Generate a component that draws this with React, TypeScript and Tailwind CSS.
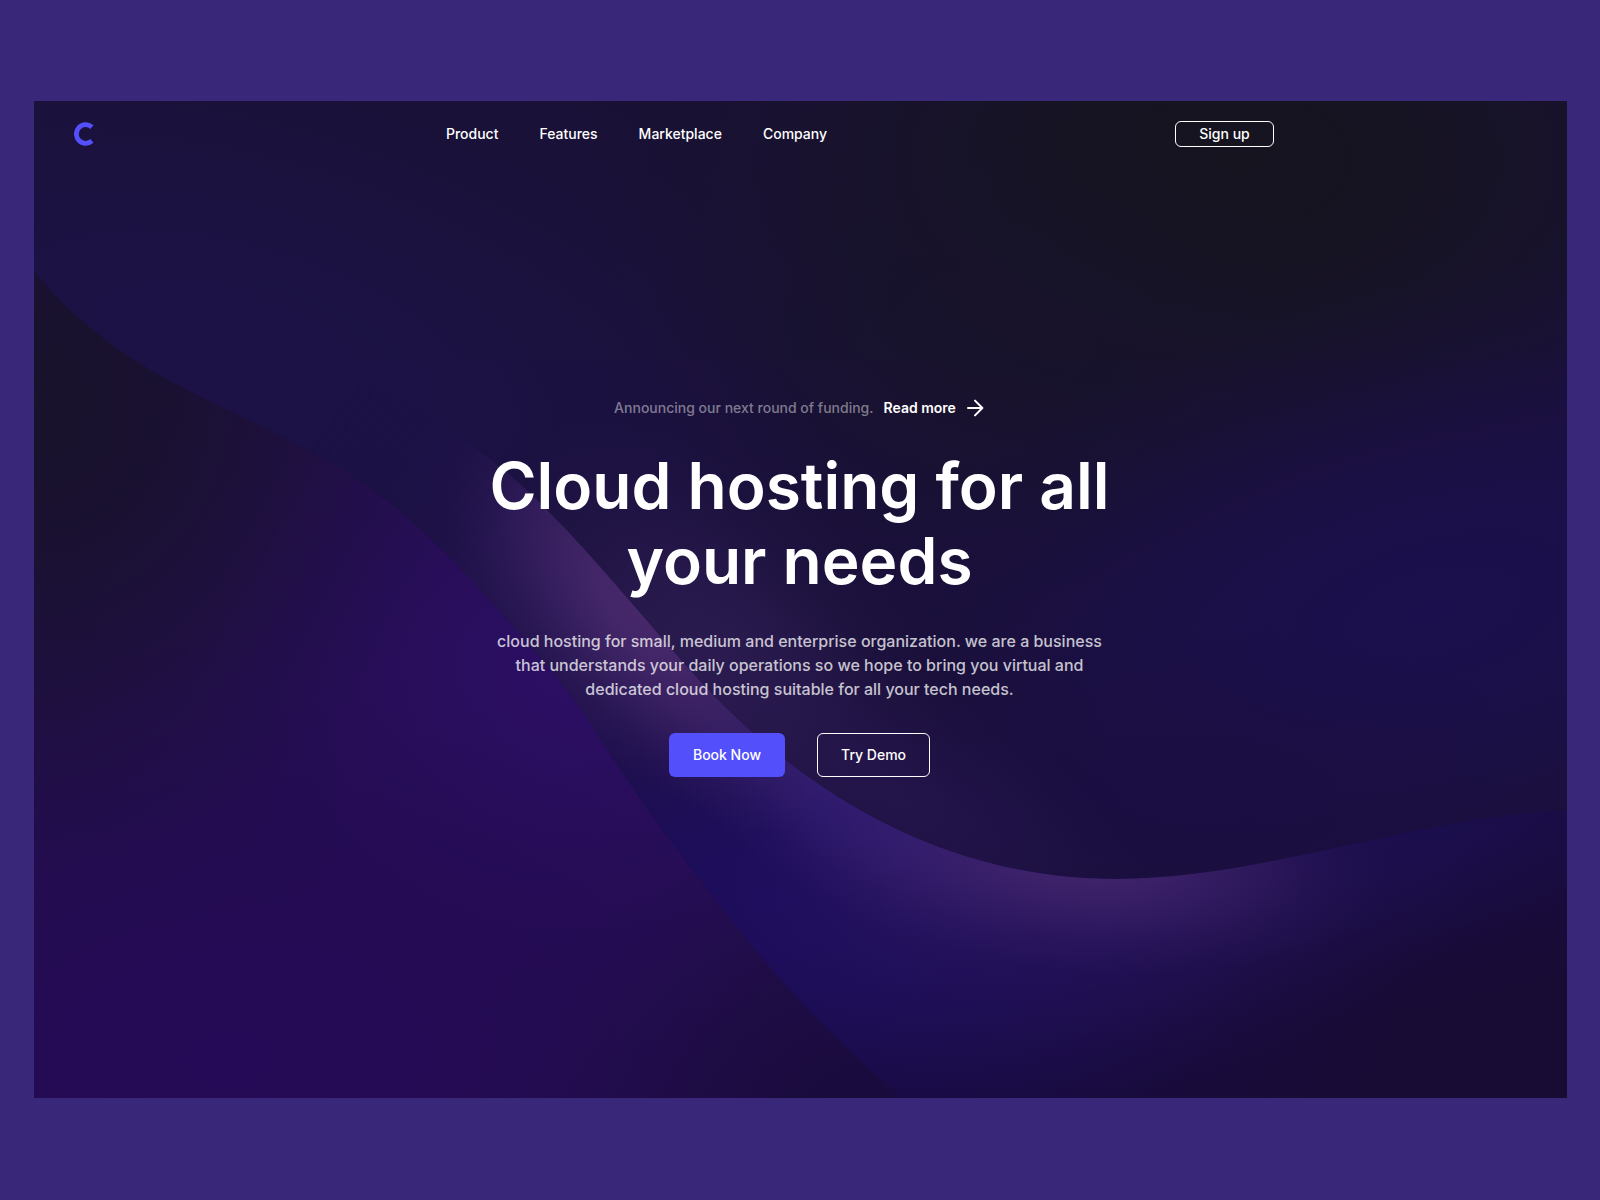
import React from 'react';

interface Glow {
    id: string;
    cx: number;
    cy: number;
    rx: number;
    ry: number;
    color: string;
    opacity?: number;
    rotate?: number;
}

const navLinks = ['Product', 'Features', 'Marketplace', 'Company'];

// Upper sheet, painted over the whole hero
const skyGlows: Glow[] = [
    { id: 'sky-left', cx: 200, cy: 260, rx: 820, ry: 380, color: '#1c1248', opacity: 0.9, rotate: 15 },
    { id: 'sky-dark', cx: 1200, cy: 60, rx: 660, ry: 400, color: '#16141f' },
    { id: 'sky-dark-mid', cx: 960, cy: 240, rx: 360, ry: 260, color: '#17132a', opacity: 0.7 },
    { id: 'sky-right', cx: 1400, cy: 510, rx: 700, ry: 330, color: '#1b0f4e', opacity: 0.95, rotate: -15 },
    { id: 'sky-low', cx: 1150, cy: 700, rx: 420, ry: 180, color: '#1a0d42', opacity: 0.8 },
    { id: 'sky-haze', cx: 680, cy: 560, rx: 290, ry: 180, color: '#2b1b50', rotate: 45 },
    { id: 'sky-haze-low', cx: 870, cy: 700, rx: 280, ry: 120, color: '#26154e', opacity: 0.7, rotate: 30 },
];

// Middle ribbon, with the two bright edges
const ribbonGlows: Glow[] = [
    { id: 'ribbon-left', cx: 300, cy: 300, rx: 520, ry: 300, color: '#1b1148', rotate: 35 },
    { id: 'ribbon-blue', cx: 760, cy: 800, rx: 620, ry: 340, color: '#1b0c5e', rotate: 10 },
    { id: 'ribbon-right', cx: 1380, cy: 720, rx: 440, ry: 190, color: '#1b0e50', opacity: 0.9, rotate: -12 },
    { id: 'ribbon-edge-low-wide', cx: 1000, cy: 780, rx: 440, ry: 220, color: '#28145e', opacity: 0.9 },
    { id: 'ribbon-edge-low', cx: 1040, cy: 750, rx: 310, ry: 120, color: '#42256c', rotate: 6 },
    { id: 'ribbon-edge-mid', cx: 770, cy: 630, rx: 300, ry: 130, color: '#36207a', opacity: 0.9, rotate: 42 },
    { id: 'ribbon-edge-top-wide', cx: 560, cy: 490, rx: 320, ry: 240, color: '#281755', rotate: 50 },
    { id: 'ribbon-edge-top', cx: 615, cy: 510, rx: 270, ry: 130, color: '#48296b', rotate: 50 },
];

// Lower left sheet
const duneGlows: Glow[] = [
    { id: 'dune-bright', cx: 540, cy: 580, rx: 500, ry: 440, color: '#2d0e66', opacity: 0.9 },
    { id: 'dune-bottom', cx: 200, cy: 960, rx: 720, ry: 440, color: '#250a57' },
    { id: 'dune-dark', cx: 0, cy: 300, rx: 440, ry: 460, color: '#18122b' },
    { id: 'dune-shade', cx: 830, cy: 1010, rx: 340, ry: 260, color: '#1a0b3e' },
];

const GlowLayer: React.FC<{ glows: Glow[] }> = ({ glows }) => (
    <>
        {glows.map(({ id, cx, cy, rx, ry, color, opacity = 1, rotate = 0 }) => (
            <g key={id} transform={`rotate(${rotate} ${cx} ${cy})`}>
                <radialGradient id={id}>
                    <stop offset="0" stopColor={color} stopOpacity={opacity} />
                    <stop offset="0.25" stopColor={color} stopOpacity={opacity * 0.84} />
                    <stop offset="0.5" stopColor={color} stopOpacity={opacity * 0.5} />
                    <stop offset="0.75" stopColor={color} stopOpacity={opacity * 0.16} />
                    <stop offset="1" stopColor={color} stopOpacity="0" />
                </radialGradient>
                <ellipse cx={cx} cy={cy} rx={rx} ry={ry} fill={`url(#${id})`} />
            </g>
        ))}
    </>
);

const Backdrop: React.FC = () => (
    <svg
        className="absolute inset-0 w-full h-full"
        viewBox="0 0 1533 997"
        preserveAspectRatio="none"
        aria-hidden="true"
    >
        <defs>
            <clipPath id="ribbon-clip">
                <path d="M0 170 C60 220 110 235 230 250 C330 265 395 312 456 358 C530 415 600 508 665 579 C760 682 900 778 1082 778 C1230 778 1380 715 1533 709 V997 H0 Z" />
            </clipPath>
            <clipPath id="dune-clip">
                <path d="M0 170 C45 225 95 260 165 295 C235 330 240 330 293 360 C370 403 430 470 476 522 C512 565 540 595 563 633 C605 700 640 745 680 797 C745 880 790 930 868 997 H0 Z" />
            </clipPath>
            {/* The ribbon melts into the sky at its left end */}
            <linearGradient id="ribbon-fade" gradientUnits="userSpaceOnUse" x1="290" y1="330" x2="450" y2="450">
                <stop offset="0" stopColor="#fff" stopOpacity="0" />
                <stop offset="1" stopColor="#fff" />
            </linearGradient>
            <mask id="ribbon-mask" maskUnits="userSpaceOnUse" x="0" y="0" width="1533" height="997">
                <rect width="1533" height="997" fill="url(#ribbon-fade)" />
            </mask>
        </defs>

        <rect width="1533" height="997" fill="#1a1038" />
        <rect width="1533" height="260" fill="#1a1535" opacity="0.4" />
        <GlowLayer glows={skyGlows} />

        <g mask="url(#ribbon-mask)">
            <g clipPath="url(#ribbon-clip)">
                <rect width="1533" height="997" fill="#180b34" />
                <GlowLayer glows={ribbonGlows} />
            </g>
        </g>

        <g clipPath="url(#dune-clip)">
            <rect width="1533" height="997" fill="#200e46" />
            <GlowLayer glows={duneGlows} />
        </g>
    </svg>
);

const Logo: React.FC = () => (
    <svg className="w-6 h-6" viewBox="0 0 24 24" fill="none" stroke="#524ffb" strokeWidth="4.8">
        <path d="M17.9 5.1A9.3 9.3 0 1 0 17.9 18.9" />
    </svg>
);

const Header: React.FC = () => (
    <header className="relative max-w-[1280px] px-10 pt-5">
        <div className="flex items-center justify-between">
            <a href="#" aria-label="Home">
                <Logo />
            </a>
            <nav className="flex gap-[41px]">
                {navLinks.map((link) => (
                    <a key={link} href="#" className="text-sm font-medium">
                        {link}
                    </a>
                ))}
            </nav>
            <button className="w-[99px] h-[26px] border border-white rounded-md text-sm leading-5 font-medium">
                Sign up
            </button>
        </div>
    </header>
);

const Hero: React.FC = () => (
    <main className="relative flex flex-col items-center pt-[251px] pr-0.5 text-center">
        <p className="flex items-center text-sm font-medium text-white/45">
            Announcing our next round of funding.
            <a href="#" className="flex items-center ml-[10px] gap-[9px] font-semibold text-white">
                Read more
                <svg className="w-5 h-5" viewBox="0 0 20 20" fill="none" stroke="currentColor" strokeWidth="2">
                    <path d="M3 10H17.4M10 2.6L17.4 10L10 17.4" strokeLinecap="round" strokeLinejoin="round" />
                </svg>
            </a>
        </p>
        <h1 className="mt-[30px] max-w-[680px] text-[64px] leading-[75px] font-semibold">
            Cloud hosting for all your needs
        </h1>
        <p className="mt-[31px] max-w-[620px] text-base font-medium text-white/75">
            cloud hosting for small, medium and enterprise organization. we are a business that understands your daily
            operations so we hope to bring you virtual and dedicated cloud hosting suitable for all your tech needs.
        </p>
        <div className="flex gap-8 mt-8">
            <button className="h-11 px-6 rounded-md bg-[#524ffb] text-sm font-medium">Book Now</button>
            <button className="h-11 px-[23px] border border-white rounded-md text-sm font-medium">Try Demo</button>
        </div>
    </main>
);

const App: React.FC = () => (
    <div className="flex min-h-screen pl-[34px] pr-[33px] pt-[101px] pb-[102px] bg-[#392779] font-['Inter',sans-serif] text-white">
        <div className="relative flex-1 overflow-hidden">
            <Backdrop />
            <Header />
            <Hero />
        </div>
    </div>
);

export default App;
